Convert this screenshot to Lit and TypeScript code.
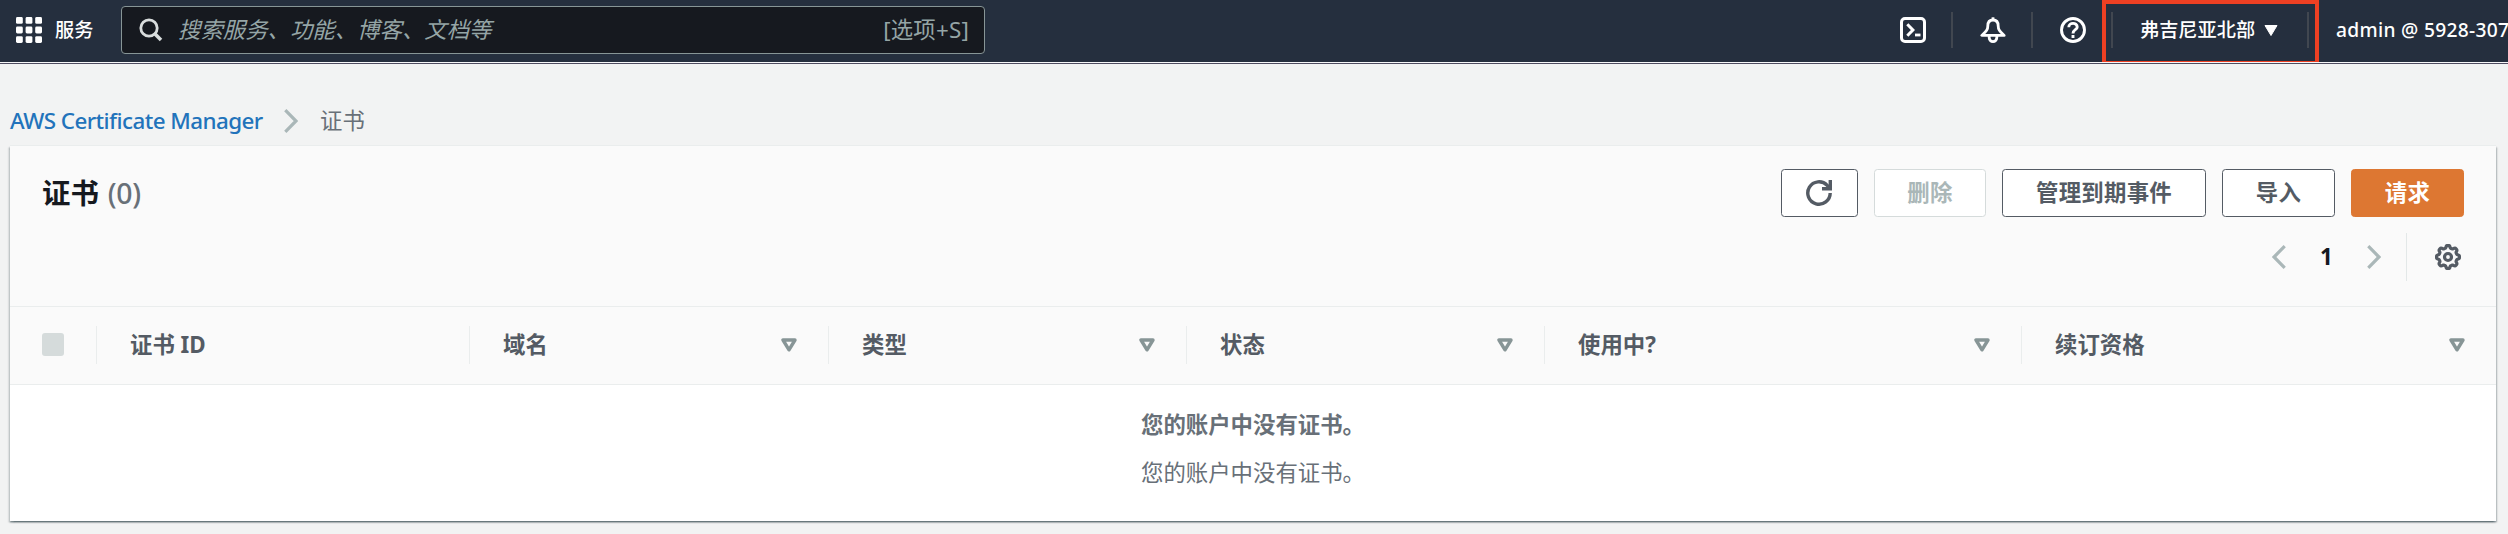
import { LitElement, html, css, svg } from 'lit';
import { customElement } from 'lit/decorators.js';

const chevronRight = html`<svg class="chev" viewBox="0 0 14 24"><path d="M1.3 1.2 L12 12 L1.3 22.8" fill="none" stroke="currentColor" stroke-width="3.2"/></svg>`;
const chevronLeft = html`<svg class="chev" viewBox="0 0 14 24"><path d="M12.7 1.2 L2 12 L12.7 22.8" fill="none" stroke="currentColor" stroke-width="3.2"/></svg>`;

const gearPath = (() => {
  const pts: string[] = [];
  const n = 144;
  for (let i = 0; i < n; i++) {
    const a = (i / n) * Math.PI * 2;
    const c = Math.cos(a * 8);
    const r = 10.3 + 1.2 * Math.tanh(c * 2.2);
    pts.push(`${(13 + r * Math.cos(a)).toFixed(2)} ${(13 + r * Math.sin(a)).toFixed(2)}`);
  }
  return `M${pts.join('L')}Z`;
})();

interface Column { label: string; filter: boolean; }
const columns: Column[] = [
  { label: '证书 ID', filter: false },
  { label: '域名', filter: true },
  { label: '类型', filter: true },
  { label: '状态', filter: true },
  { label: '使用中?', filter: true },
  { label: '续订资格', filter: true },
];

@customElement('acm-nav')
export class AcmNav extends LitElement {
  static styles = css`
    :host { display: block; }
    .bar {
      display: flex; align-items: center; height: 60px; padding-left: 16px; padding-bottom: 2px;
      background: #252f3e; color: #fff; overflow: hidden; white-space: nowrap;
    }
    .edge { height: 1px; background: #f6f6f8; }
    .edge2 { height: 1px; background: #4e4c60; }
    .ico { display: block; flex: none; width: 26px; height: 26px; }
    .services { flex: none; margin-left: 13px; width: 40px; font-size: 19.2px; font-weight: 500; line-height: 26px; }
    .search {
      box-sizing: border-box; display: flex; align-items: center; width: 864px; height: 48px;
      margin-left: 26px; padding: 0 15px 0 17px; flex: none;
      border: 1px solid #879596; border-radius: 4px; background: #16191f; color: #95a5a6; font-size: 22.4px;
    }
    .mag { width: 24px; height: 24px; flex: none; }
    .ph { margin-left: 15px; font-style: italic; flex: 1; line-height: 30px; }
    .key { line-height: 30px; letter-spacing: .2px; }
    .tools { display: flex; align-items: center; margin-left: 915px; flex: none; }
    .sep { flex: none; width: 2px; height: 36px; background: #414750; }
    .cell { padding: 0 25px 0 27px; }
    .cell.first { padding-left: 0; }
    .region {
      box-sizing: border-box; position: relative; display: flex; align-items: center; width: 194px;
      padding-left: 27px; font-size: 19.2px; font-weight: 500; line-height: 26px;
    }
    .caret { width: 14px; height: 11px; margin-left: 9px; }
    .frame {
      position: absolute; left: -11px; top: -17px; width: 217px; height: 65px; box-sizing: border-box;
      border: 4px solid #ee4023;
    }
    .acct { flex: none; margin-left: 27px; font-size: 19.2px; font-weight: 500; line-height: 26px; letter-spacing: .3px; }
  `;
  render() {
    const cells = [0, 1, 2].map(r => [0, 1, 2].map(c => svg`<rect x=${c * 9.6} y=${r * 9.6} width="6.8" height="6.8" rx="1.4" fill="#fff"/>`));
    return html`
      <nav class="bar">
        <svg class="ico" viewBox="0 0 26 26">${cells}</svg>
        <span class="services">服务</span>
        <div class="search">
          <svg class="mag" viewBox="0 0 24 24" fill="none" stroke="#d9dddd"><circle cx="10" cy="10" r="8.2" stroke-width="2.8"/><path d="M15.8 15.8 L22 22" stroke-width="3.6"/></svg>
          <span class="ph">搜索服务、功能、博客、文档等</span>
          <span class="key">[选项+S]</span>
        </div>
        <div class="tools">
          <div class="cell first"><svg class="ico" viewBox="0 0 26 26" fill="none" stroke="#fff" stroke-width="3">
            <rect x="1.5" y="1.5" width="23" height="23" rx="3.5"/>
            <path d="M7.3 7.3 L12.9 13 L7.3 18.7"/><path d="M15 18 H20.5" stroke-width="2.8"/></svg></div>
          <i class="sep"></i>
          <div class="cell"><svg class="ico" viewBox="0 0 26 26" fill="none" stroke="#fff" stroke-width="2.8" stroke-linejoin="round">
            <path d="M13 0.3 V3"/><path d="M13 3 C9.2 3 7.8 5.6 7.8 9 C7.8 13.2 6 14.4 1.8 18.4 H24.2 C20 14.4 18.2 13.2 18.2 9 C18.2 5.6 16.8 3 13 3 Z"/>
            <path d="M9.2 19 V20.8 A3.8 3.8 0 0 0 16.8 20.8 V19"/></svg></div>
          <i class="sep"></i>
          <div class="cell"><svg class="ico" viewBox="0 0 26 26" fill="none" stroke="#fff" stroke-width="2.9">
            <circle cx="13" cy="13" r="11.5"/><path d="M8.8 10.2 C8.8 5.2 17.2 5.2 17.2 9.9 C17.2 12.9 13 12.6 13 16.6"/><path d="M13 18 V21"/></svg></div>
          <i class="sep"></i>
          <div class="region">弗吉尼亚北部
            <svg class="caret" viewBox="0 0 14 11"><path d="M1 .5 H13 L7 10.5 Z" fill="#fff" stroke="#fff" stroke-linejoin="round"/></svg>
            <div class="frame"></div>
          </div>
          <i class="sep"></i>
          <span class="acct">admin @ 5928-3073</span>
        </div>
      </nav>
      <div class="edge"></div><div class="edge2"></div>`;
  }
}

@customElement('acm-table')
export class AcmTable extends LitElement {
  static styles = css`
    :host { display: block; }
    .panel {
      background: #fff; border-top: 1px solid #eaeded; height: 375px;
      box-shadow: 0 1.6px 1.6px 0 rgba(0,28,36,.4), 1.6px 1.6px 1.6px 0 rgba(0,28,36,.15), -1.6px 1.6px 1.6px 0 rgba(0,28,36,.15);
    }
    .head { box-sizing: border-box; height: 161px; padding: 23px 32px 0 32px; background: #fafafa; border-bottom: 1px solid #eaeded; }
    .row { display: flex; align-items: center; }
    h1 { margin: 0; flex: 1; font-size: 28.4px; line-height: 48px; font-weight: 700; color: #16191f; }
    .count { font-weight: 500; color: #687078; letter-spacing: -.2px; margin-left: 1.5px; }
    .btns { display: flex; gap: 16px; }
    .btn {
      box-sizing: border-box; height: 48px; padding: 0; border: 1.6px solid #545b64; border-radius: 3.5px;
      background: #fff; color: #545b64; font: inherit; font-size: 22.4px; font-weight: 700; letter-spacing: .25px; line-height: 42px;
    }
    .btn.icon { width: 77px; display: flex; align-items: center; justify-content: center; }
    .btn.off { color: #aab7b8; border-color: #d5dbdb; width: 112px; }
    .btn.main { background: #dd7732; border-color: #dd7732; color: #fff; }
    .w113 { width: 113px; }
    .w204 { width: 204px; }
    .i26 { width: 26px; height: 26px; display: block; flex: none; }
    .reload { margin-right: 1px; }
    .chev { width: 14px; height: 24px; display: block; color: #aab7b8; }
    .pager { display: flex; align-items: center; justify-content: flex-end; height: 48px; margin-top: 16px; padding-right: 3px; }
    .page { width: 81px; text-align: center; font-size: 22.4px; font-weight: 700; color: #16191f; line-height: 48px; }
    .vsep { width: 1px; height: 48px; background: #e3e8e8; margin: 0 28px 0 25px; }
    .cols {
      box-sizing: border-box; padding-bottom: 1px;
      display: grid; align-items: center; height: 78px; background: #fafafa; border-bottom: 1px solid #eaeded;
      grid-template-columns: 86px 373px 359px 358px 358px 477px 475px;
    }
    .box { width: 22px; height: 23px; margin: 0 0 2px 32px; border-radius: 3px; background: #d5dbdb; }
    .col {
      box-sizing: border-box; height: 38px; display: flex; align-items: center; justify-content: space-between;
      border-left: 1px solid #eaeded; padding: 0 31px 0 33px; font-size: 22.4px; font-weight: 700; color: #545b64; line-height: 38px;
    }
    .tri { width: 16px; height: 14px; display: block; }
    .empty { display: flex; flex-direction: column; align-items: center; padding-top: 22px; font-size: 22.4px; color: #687078; line-height: 35.2px; }
    .empty p { margin: 0 0 12.8px; }
    .empty b { font-weight: 700; }
  `;
  render() {
    return html`
      <section class="panel">
        <div class="head">
          <div class="row">
            <h1>证书 <span class="count">(0)</span></h1>
            <div class="btns">
              <button class="btn icon"><svg class="i26 reload" viewBox="0 0 26 26" fill="none" stroke="#545b64" stroke-width="3.4"><path d="M24.2 13 A11.2 11.2 0 1 1 21.2 5.4 L24 8.6"/><path d="M24.3 0 V8.7 H16"/></svg></button>
              <button class="btn off">删除</button>
              <button class="btn w204">管理到期事件</button>
              <button class="btn w113">导入</button>
              <button class="btn main w113">请求</button>
            </div>
          </div>
          <div class="pager">
            ${chevronLeft}<span class="page">1</span>${chevronRight}
            <i class="vsep"></i>
            <svg class="i26" viewBox="0 0 26 26" fill="none" stroke="#545b64" stroke-width="3.2"><path d=${gearPath}/><circle cx="13" cy="13" r="3.5"/></svg>
          </div>
        </div>
        <div class="cols">
          <div class="box"></div>
          ${columns.map(c => html`<div class="col"><span>${c.label}</span>${c.filter
            ? html`<svg class="tri" viewBox="0 0 16 14"><path d="M2 2 H14 L8 11.8 Z" fill="none" stroke="#879596" stroke-width="3.4" stroke-linejoin="round"/></svg>` : ''}</div>`)}
        </div>
        <div class="empty"><p><b>您的账户中没有证书。</b></p><p>您的账户中没有证书。</p></div>
      </section>`;
  }
}

@customElement('app-root')
export class AppRoot extends LitElement {
  static styles = css`
    :host {
      display: block; height: 534px; overflow: hidden; background: #f2f3f3;
      font-family: "Noto Sans", "Noto Sans CJK SC", sans-serif;
    }
    .crumbs { display: flex; align-items: center; height: 34px; padding: 40px 0 7px 10px; font-size: 22.4px; line-height: 34px; }
    .link { color: #2273bb; width: 253px; white-space: nowrap; font-weight: 500; letter-spacing: -.56px; }
    .chev { width: 14px; height: 24px; margin: 0 22px 0 21px; color: #aab7b8; }
    .here { color: #687078; }
    .main { padding: 0 12px 0 10px; }
  `;
  render() {
    return html`
      <acm-nav></acm-nav>
      <div class="crumbs"><span class="link">AWS Certificate Manager</span>${chevronRight}<span class="here">证书</span></div>
      <div class="main"><acm-table></acm-table></div>`;
  }
}
